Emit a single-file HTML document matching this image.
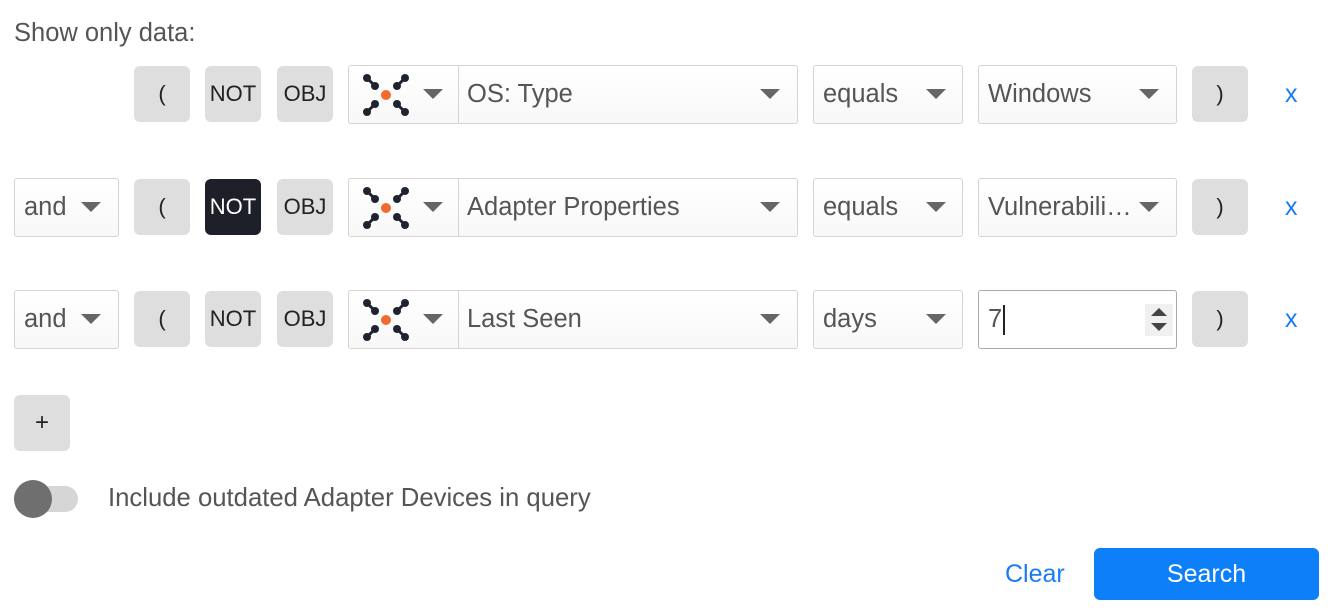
<!DOCTYPE html><html><head><style>
body{margin:0;width:1335px;height:609px;background:#fff;font-family:"Liberation Sans",sans-serif;color:#444;position:relative;overflow:hidden}
.a{position:absolute;box-sizing:border-box}
.btn{background:#dedede;border-radius:6px;height:56px;width:56px;display:flex;align-items:center;justify-content:center;font-size:22px;color:#222}
.sel{border:1px solid #d4d4d4;border-radius:3px;height:59px;font-size:25.5px;color:#555;display:flex;align-items:center;padding-left:9px;background:linear-gradient(#fff,#f8f8f8)}
.car{position:absolute;width:0;height:0;border-left:10px solid transparent;border-right:10px solid transparent;border-top:10px solid #666;top:23px}
.x{color:#1a7cf4;font-size:25px}
</style></head><body>
<div class="a" style="left:14px;top:19px;font-size:25.5px;color:#555">Show only data:</div>

<div id="rows"></div>
<script>
var rows=[[65,false,'OS: Type','equals','Windows',false],[178,true,'Adapter Properties','equals','Vulnerabili…',false],[290,true,'Last Seen','days','7',true]];
var h='';
var icon='<svg width="50" height="46" viewBox="0 0 50 46" style="position:absolute;left:12px;top:6px"><g stroke="#1e2330" stroke-width="3" stroke-linecap="round"><line x1="6" y1="6" x2="14" y2="14"/><line x1="44" y1="6" x2="36" y2="14"/><line x1="6" y1="40" x2="14" y2="32"/><line x1="44" y1="40" x2="36" y2="32"/></g><g fill="#1e2330"><circle cx="6" cy="6" r="4"/><circle cx="14" cy="14" r="4"/><circle cx="44" cy="6" r="4"/><circle cx="36" cy="14" r="4"/><circle cx="6" cy="40" r="4"/><circle cx="14" cy="32" r="4"/><circle cx="44" cy="40" r="4"/><circle cx="36" cy="32" r="4"/></g><circle cx="25" cy="23" r="5" fill="#f26a2e"/></svg>';
rows.forEach(function(r,i){var y=r[0];
if(r[1])h+='<div class="a sel" style="left:14px;top:'+y+'px;width:105px">and<div class="car" style="left:66px"></div></div>';
h+='<div class="a btn" style="left:134px;top:'+(y+1)+'px">(</div>';
h+='<div class="a btn" style="left:205px;top:'+(y+1)+'px;'+(i==1?'background:#1e2029;color:#fff':'')+'">NOT</div>';
h+='<div class="a btn" style="left:277px;top:'+(y+1)+'px">OBJ</div>';
h+='<div class="a sel" style="left:348px;top:'+y+'px;width:450px;padding:0">'+icon+'<div class="car" style="left:74px"></div><div style="position:absolute;left:109px;top:0;bottom:0;border-left:1px solid #d4d4d4"></div><span style="position:absolute;left:118px">'+r[2]+'</span><div class="car" style="left:411px"></div></div>';
h+='<div class="a sel" style="left:813px;top:'+y+'px;width:150px">'+r[3]+'<div class="car" style="left:112px"></div></div>';
if(r[5])h+='<div class="a sel" style="left:978px;top:'+y+'px;width:199px;border-color:#aaa;background:#fff">7<span style="display:inline-block;width:2px;height:30px;background:#222;margin-left:1px"></span><div style="position:absolute;left:166px;top:13px;width:28px;height:32px;background:#f0f0f0"><div style="position:absolute;left:6px;top:4px;border-left:8px solid transparent;border-right:8px solid transparent;border-bottom:8px solid #444"></div><div style="position:absolute;left:6px;top:19px;border-left:8px solid transparent;border-right:8px solid transparent;border-top:8px solid #444"></div></div></div>';
else h+='<div class="a sel" style="left:978px;top:'+y+'px;width:199px">'+r[4]+'<div class="car" style="left:160px"></div></div>';
h+='<div class="a btn" style="left:1192px;top:'+(y+1)+'px">)</div>';
h+='<div class="a x" style="left:1285px;top:'+(y+15)+'px">x</div>';
});
document.getElementById('rows').innerHTML=h;
</script>
<div class="a btn" style="left:14px;top:395px;font-size:24px">+</div>
<div class="a" style="left:14px;top:486px;width:64px;height:26px;border-radius:13px;background:#d6d6d6"></div>
<div class="a" style="left:14px;top:480px;width:38px;height:38px;border-radius:50%;background:#6f6f6f"></div>
<div class="a" style="left:108px;top:484px;font-size:25.7px;color:#555">Include outdated Adapter Devices in query</div>
<div class="a x" style="left:1005px;top:560px">Clear</div>
<div class="a" style="left:1094px;top:548px;width:225px;height:52px;background:#0d7ff8;border-radius:6px;color:#fff;font-size:25px;display:flex;align-items:center;justify-content:center">Search</div>
</body></html>
